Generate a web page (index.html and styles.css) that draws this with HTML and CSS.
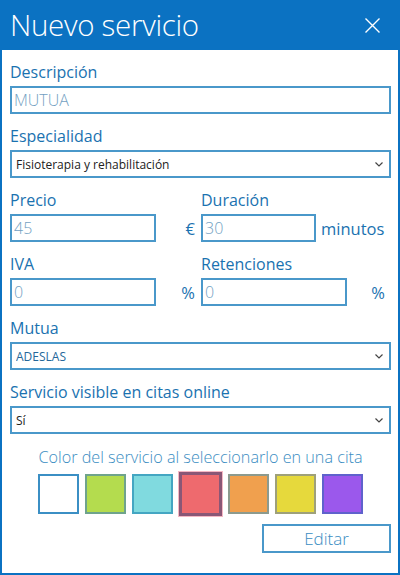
FILE: index.html
```html
<!DOCTYPE html>
<html lang="es">
<head>
  <meta charset="UTF-8" />
  <meta name="viewport" content="width=device-width, initial-scale=1.0" />
  <title>Nuevo servicio</title>
  <link rel="stylesheet" href="styles.css">
</head>
<body>
  <div class="ventana">
    <header class="cabecera">
      <h1>Nuevo servicio</h1>
      <button class="cerrar" aria-label="Cerrar">
        <svg width="15" height="15" viewBox="0 0 15 15">
          <path d="M0.5 0.5 L14.5 14.5 M14.5 0.5 L0.5 14.5" stroke="#fff" stroke-width="1.4" fill="none" />
        </svg>
      </button>
    </header>

    <div class="formulario">
      <div class="campo">
        <label for="descripcion">Descripción</label>
        <input type="text" id="descripcion" value="MUTUA" />
      </div>

      <div class="campo">
        <label>Especialidad</label>
        <div class="selector">
          <select>
            <option>Fisioterapia y rehabilitación</option>
          </select>
          <svg class="flecha" width="8" height="5" viewBox="0 0 8 5"><path d="M0.5 0.5 L4 4 L7.5 0.5" stroke="#444" stroke-width="1.2" fill="none" /></svg>
        </div>
      </div>

      <div class="fila">
        <div class="mitad">
          <label>Precio</label>
          <div class="con-unidad">
            <input type="text" class="ancho" value="45" />
            <span class="unidad derecha">€</span>
          </div>
        </div>
        <div class="mitad">
          <label>Duración</label>
          <div class="con-unidad">
            <input type="text" class="corto" value="30" />
            <span class="unidad">minutos</span>
          </div>
        </div>
      </div>

      <div class="fila">
        <div class="mitad">
          <label>IVA</label>
          <div class="con-unidad">
            <input type="text" class="ancho" value="0" />
            <span class="unidad derecha">%</span>
          </div>
        </div>
        <div class="mitad">
          <label>Retenciones</label>
          <div class="con-unidad">
            <input type="text" class="ancho" value="0" />
            <span class="unidad derecha">%</span>
          </div>
        </div>
      </div>

      <div class="campo">
        <label>Mutua</label>
        <div class="selector">
          <select class="azul">
            <option>ADESLAS</option>
          </select>
          <svg class="flecha" width="8" height="5" viewBox="0 0 8 5"><path d="M0.5 0.5 L4 4 L7.5 0.5" stroke="#444" stroke-width="1.2" fill="none" /></svg>
        </div>
      </div>

      <div class="campo">
        <label>Servicio visible en citas online</label>
        <div class="selector">
          <select>
            <option>Sí</option>
          </select>
          <svg class="flecha" width="8" height="5" viewBox="0 0 8 5"><path d="M0.5 0.5 L4 4 L7.5 0.5" stroke="#444" stroke-width="1.2" fill="none" /></svg>
        </div>
      </div>

      <p class="titulo-color">Color del servicio al seleccionarlo en una cita</p>
      <div class="colores">
        <div class="color blanco"></div>
        <div class="color verde"></div>
        <div class="color cian"></div>
        <div class="color rojo seleccionado"></div>
        <div class="color naranja"></div>
        <div class="color amarillo"></div>
        <div class="color morado"></div>
      </div>

      <div class="acciones">
        <button class="editar">Editar</button>
      </div>
    </div>
  </div>
</body>
</html>
```

FILE: styles.css
```css
* {
  box-sizing: border-box;
}

html, body {
  margin: 0;
  padding: 0;
  background-color: #fff;
  font-family: 'Open Sans', 'Noto Sans', sans-serif;
}

.ventana {
  width: 400px;
  height: 575px;
  border: 2px solid #0b72c2;
  border-top: none;
  display: flex;
  flex-direction: column;
}

.cabecera {
  height: 50px;
  margin: 0 -2px;
  background-color: #0b72c2;
  display: flex;
  align-items: center;
  justify-content: space-between;
  padding: 0 20px 0 10px;
}

.cabecera h1 {
  margin: 0;
  font-size: 29.5px;
  font-weight: 300;
  color: #fff;
  line-height: 1;
  letter-spacing: -0.3px;
}

.cerrar {
  background: none;
  border: none;
  padding: 0;
  width: 15px;
  height: 15px;
  display: flex;
}

.formulario {
  padding: 8px 7px 0 8px;
}

label {
  display: block;
  font-size: 16px;
  line-height: 28px;
  color: #1a72b0;
}

.campo {
  margin-bottom: 8px;
}

input[type="text"] {
  display: block;
  width: 100%;
  height: 28px;
  border: 2px solid #4a98ca;
  padding: 0 2px;
  font-family: inherit;
  font-size: 16px;
  font-weight: 300;
  color: #739fc2;
  outline: none;
}

.selector {
  display: flex;
  align-items: center;
  height: 28px;
  border: 2px solid #4a98ca;
  padding: 0 6px 0 2px;
}

.selector select {
  flex: 1;
  appearance: none;
  -webkit-appearance: none;
  border: none;
  background: none;
  font-family: inherit;
  font-size: 12px;
  color: #222;
  padding: 0 2px;
  outline: none;
}

.selector select.azul {
  color: #25679a;
}

.fila {
  display: flex;
  margin-bottom: 8px;
}

.mitad {
  width: 191px;
}

.mitad + .mitad {
  width: 190px;
}

.con-unidad {
  display: flex;
  align-items: center;
  height: 28px;
}

.con-unidad input.ancho {
  width: 146px;
}

.con-unidad input.corto {
  width: 115px;
}

.unidad {
  font-size: 16.5px;
  color: #1a72b0;
  margin-left: 5px;
}

.unidad.derecha {
  flex: 1;
  text-align: right;
  padding-right: 6px;
}

.titulo-color {
  margin: 12px 0 6px;
  text-align: center;
  font-size: 16.2px;
  font-weight: 300;
  color: #3a8dc2;
  line-height: 22px;
}

.colores {
  display: flex;
  justify-content: center;
  gap: 6px;
}

.color {
  width: 41px;
  height: 40px;
  border: 2px solid #5a8fa6;
}

.blanco { background-color: #fff; border-color: #3b8fc4; }
.verde { background-color: #b4dc4e; border-color: #6fa38c; }
.cian { background-color: #80dadf; border-color: #44a6c2; }
.rojo { background-color: #ee6a6e; }
.naranja { background-color: #f0a04e; border-color: #8c9a8e; }
.amarillo { background-color: #e6d93c; border-color: #9ea07a; }
.morado { background-color: #9b58ec; border-color: #5f62cc; }

.color.seleccionado {
  border: 3px solid #8a5776;
  outline: 1px solid #f5b8c4;
  margin: -2px 0;
  width: 43px;
  height: 44px;
}

.acciones {
  display: flex;
  justify-content: flex-end;
  margin-top: 10px;
}

.editar {
  width: 129px;
  height: 29px;
  background: #fff;
  border: 2px solid #4a98ca;
  font-family: inherit;
  font-size: 17px;
  font-weight: 300;
  color: #3a8dc2;
  padding: 0;
}
```
